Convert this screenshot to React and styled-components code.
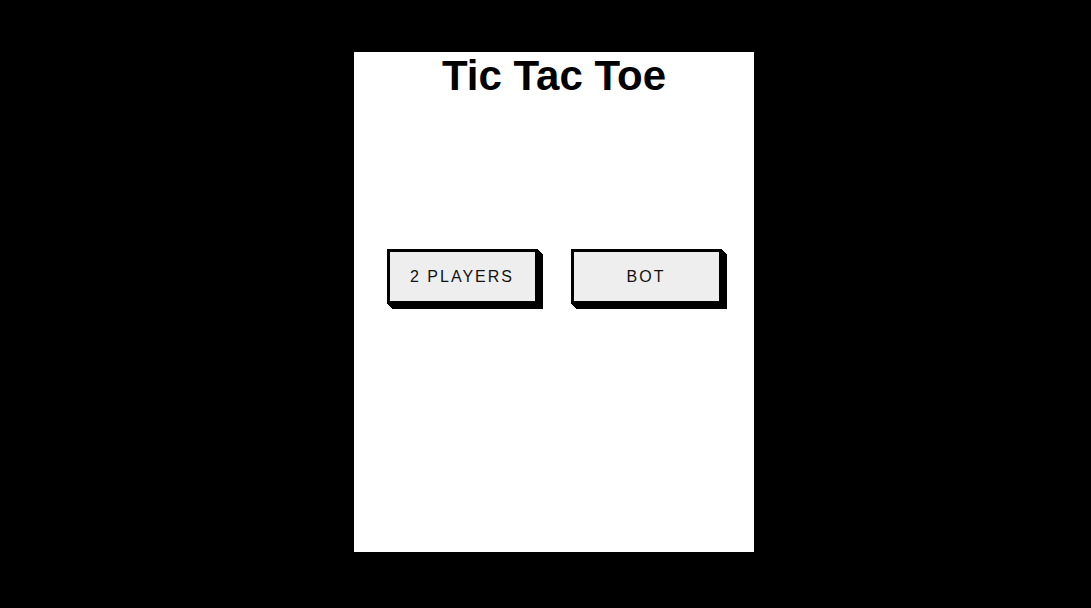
import React from 'react';
import styled, { createGlobalStyle } from 'styled-components';

const GlobalStyle = createGlobalStyle`
  html, body {
    margin: 0;
    padding: 0;
    background: #000;
  }
  body {
    font-family: "Liberation Sans", Arial, sans-serif;
  }
`;

const Page = styled.div`
  width: 100%;
  height: 608px;
  background: #000;
  padding: 52px 0 0 354px;
  box-sizing: border-box;
`;

const Panel = styled.div`
  width: 400px;
  height: 500px;
  background: #fff;
  display: flex;
  flex-direction: column;
  align-items: center;
`;

const Title = styled.h1`
  margin: 0;
  font-size: 42px;
  line-height: 48px;
  font-weight: 700;
  color: #000;
`;

const ButtonRow = styled.div`
  display: flex;
  gap: 33px;
  margin-top: 149px;
`;

const ModeButton = styled.button`
  width: 151px;
  height: 55px;
  box-sizing: border-box;
  border: 3px solid #000;
  background: #eee;
  box-shadow: 1px 1px 0 #000, 2px 2px 0 #000, 3px 3px 0 #000, 4px 4px 0 #000,
    5px 5px 0 #000;
  font-family: "Liberation Sans", Arial, sans-serif;
  font-size: 16px;
  letter-spacing: 2px;
  color: #111;
  text-transform: uppercase;
  cursor: pointer;
  padding: 0;
`;

export default function App() {
  return (
    <>
      <GlobalStyle />
      <Page>
        <Panel>
          <Title>Tic Tac Toe</Title>
          <ButtonRow>
            <ModeButton>2 Players</ModeButton>
            <ModeButton>Bot</ModeButton>
          </ButtonRow>
        </Panel>
      </Page>
    </>
  );
}
